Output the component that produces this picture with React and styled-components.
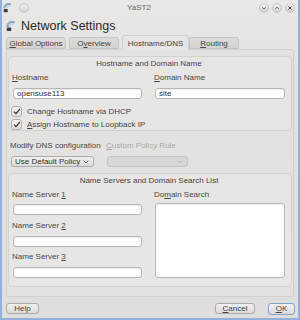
import styled, { createGlobalStyle } from "styled-components";

const GlobalStyle = createGlobalStyle`
  html, body { margin: 0; padding: 0; background: #f4f4f4; }
  body {
    font-family: "Liberation Sans", Arial, sans-serif;
    font-size: 8px;
    color: #444;
  }
  * { box-sizing: border-box; }
`;

const Window = styled.div`
  width: 300px;
  height: 320px;
  display: flex;
  flex-direction: column;
  background: linear-gradient(#e9e8e7 0, #e3e2e0 80px, #dfdedc 100%);
  border: 2px solid #8fb1da;
  border-top: none;
`;

const TitleBar = styled.div`
  height: 15px;
  display: flex;
  align-items: center;
  padding: 0 3px 0 1px;
  gap: 7px;
`;

const TitleText = styled.div`
  flex: 1;
  text-align: center;
  color: #666;
  font-size: 8px;
  padding-right: 10px;
`;

const WinButtons = styled.div`
  display: flex;
  gap: 3px;
`;

const Header = styled.div`
  height: 20px;
  display: flex;
  align-items: center;
  gap: 5px;
  padding-left: 4px;
  padding-top: 2px;
`;

const Heading = styled.div`
  font-size: 12.5px;
  color: #2a2a2a;
`;

const TabBar = styled.div`
  height: 14px;
  display: flex;
  align-items: flex-end;
  padding-left: 4px;
  position: relative;
  z-index: 1;
`;

const Tab = styled.div`
  width: ${(p) => p.$w}px;
  height: ${(p) => (p.$active ? 15 : 12)}px;
  margin-right: ${(p) => p.$mr || 0}px;
  margin-bottom: ${(p) => (p.$active ? -1 : 0)}px;
  display: flex;
  align-items: center;
  justify-content: center;
  border: 1px solid ${(p) => (p.$active ? "#d2d0ce" : "#c6c4c2")};
  border-bottom: ${(p) => (p.$active ? "none" : "1px solid #c6c4c2")};
  border-radius: 3px 3px 0 0;
  background: ${(p) =>
    p.$active ? "#e6e5e3" : "linear-gradient(#dedddb, #d4d3d1)"};
  color: #444;
`;

const Panel = styled.div`
  height: 248px;
  margin: 0 4px;
  border: 1px solid #d2d0ce;
  border-radius: 0 3px 3px 3px;
  background: #e3e2e0;
  padding: 6px 1px 0;
  display: flex;
  flex-direction: column;
`;

const Group = styled.div`
  height: ${(p) => p.$h}px;
  border: 1px solid #d4d2d0;
  border-radius: 4px;
  background: #e7e6e4;
  padding: 0 6px 0 4px;
`;

const GroupTitle = styled.div`
  height: 11px;
  line-height: 11px;
  margin-top: 1px;
  text-align: center;
  color: #444;
`;

const Columns = styled.div`
  display: grid;
  grid-template-columns: 129px 130px;
  column-gap: 13px;
`;

const Col = styled.div`
  display: flex;
  flex-direction: column;
`;

const Label = styled.div`
  height: 10px;
  line-height: 10px;
  margin-top: ${(p) => p.$mt || 0}px;
  margin-left: -1px;
  color: ${(p) => (p.$disabled ? "#aaa8a6" : "#484848")};
  white-space: nowrap;
`;

const Mn = styled.span`
  text-decoration: underline;
`;

const Input = styled.div`
  height: ${(p) => p.$h || 11}px;
  margin-top: ${(p) => p.$mt || 0}px;
  background: #fff;
  border: 1px solid #b9b7b5;
  border-radius: 3px;
  box-shadow: inset 0 1px 1px rgba(0, 0, 0, 0.08);
  padding: 0 3px;
  line-height: 9px;
  color: #333;
`;

const CheckRow = styled.div`
  height: 13px;
  margin-top: ${(p) => p.$mt || 0}px;
  margin-left: -2px;
  display: flex;
  align-items: center;
  gap: 5px;
  white-space: nowrap;
  color: #444;
`;

const CheckBox = styled.div`
  width: 11px;
  height: 11px;
  border: 1px solid #b0aeac;
  border-radius: 3px;
  background: linear-gradient(#f3f2f1, #e2e1df);
  display: flex;
  align-items: center;
  justify-content: center;
`;

const DnsRow = styled.div`
  margin-top: 10px;
  padding-left: 2px;
  height: 32px;
  display: grid;
  grid-template-columns: 96px 84px;
`;

const DnsCol = styled.div`
  display: flex;
  flex-direction: column;
  padding-left: 1px;
`;

const Combo = styled.div`
  width: ${(p) => p.$w}px;
  height: 11px;
  margin-top: 5px;
  border: 1px solid ${(p) => (p.$disabled ? "#c6c4c2" : "#adaba9")};
  border-radius: 3px;
  background: ${(p) =>
    p.$disabled ? "#d8d7d5" : "linear-gradient(#f1f0ef, #dddcda)"};
  display: flex;
  align-items: center;
  justify-content: space-between;
  padding: 0 4px 0 3px;
  color: #333;
  white-space: nowrap;
`;

const ButtonRow = styled.div`
  display: flex;
  align-items: center;
  padding: 5px 3px 0 4px;
  height: 18px;
`;

const Spacer = styled.div`
  flex: 1;
`;

const Button = styled.div`
  width: ${(p) => p.$w}px;
  height: ${(p) => (p.$focus ? 12 : 11)}px;
  margin-left: ${(p) => p.$ml || 0}px;
  border: 1px solid ${(p) => (p.$focus ? "#7fa4d2" : "#adaba9")};
  border-radius: 3px;
  background: linear-gradient(#f2f1f0, #dcdbd9);
  display: flex;
  align-items: center;
  justify-content: center;
  color: #444;
`;

const YastIcon = ({ size = 10 }) => (
  <svg width={size} height={size + 1} viewBox="0 0 10 11">
    <path d="M1.5 6 A4.5 4.5 0 0 1 8.5 1.8" fill="none" stroke="#8aa8c4" strokeWidth="2.2" />
    <path d="M3.5 6 A2.6 2.6 0 0 1 7.4 3.8" fill="none" stroke="#bcd0e2" strokeWidth="1.2" />
    <rect x="0.8" y="6.5" width="4.4" height="3.6" rx="0.5" fill="#3b3b3b" />
  </svg>
);

const RoundBtn = ({ glyph }) => (
  <svg width="10" height="10" viewBox="0 0 10 10">
    <defs>
      <linearGradient id="rb" x1="0" y1="0" x2="0" y2="1">
        <stop offset="0" stopColor="#f4f4f4" />
        <stop offset="1" stopColor="#cfcfcf" />
      </linearGradient>
    </defs>
    <circle cx="5" cy="5" r="4.4" fill="url(#rb)" stroke="#b9b9b9" strokeWidth="0.7" />
    {glyph === "down" && <path d="M3.3 4.3 L5 6 L6.7 4.3" fill="none" stroke="#555" strokeWidth="0.9" />}
    {glyph === "up" && <path d="M3.3 5.8 L5 4.1 L6.7 5.8" fill="none" stroke="#555" strokeWidth="0.9" />}
    {glyph === "x" && <path d="M3.5 3.5 L6.5 6.5 M6.5 3.5 L3.5 6.5" fill="none" stroke="#444" strokeWidth="1" />}
  </svg>
);

const Chevron = ({ color = "#555" }) => (
  <svg width="6" height="4" viewBox="0 0 6 4">
    <path d="M0.7 0.7 L3 3 L5.3 0.7" fill="none" stroke={color} strokeWidth="0.9" />
  </svg>
);

const Check = () => (
  <svg width="8" height="7" viewBox="0 0 8 7">
    <path d="M1 3.6 L3 5.6 L7 0.8" fill="none" stroke="#2a2a2a" strokeWidth="1.2" />
  </svg>
);

export default function App() {
  return (
    <>
      <GlobalStyle />
      <Window>
        <TitleBar>
          <YastIcon size={9} />
          <RoundBtn />
          <TitleText>YaST2</TitleText>
          <WinButtons>
            <RoundBtn glyph="down" />
            <RoundBtn glyph="up" />
            <RoundBtn glyph="x" />
          </WinButtons>
        </TitleBar>

        <Header>
          <YastIcon size={10} />
          <Heading>Network Settings</Heading>
        </Header>

        <TabBar>
          <Tab $w={60} $mr={3}>
            <span><Mn>G</Mn>lobal Options</span>
          </Tab>
          <Tab $w={50} $mr={3}>
            <span>O<Mn>v</Mn>erview</span>
          </Tab>
          <Tab $w={67} $active>
            <span>Hostname/DNS</span>
          </Tab>
          <Tab $w={50}>
            <span><Mn>R</Mn>outing</span>
          </Tab>
        </TabBar>

        <Panel>
          <Group $h={75}>
            <GroupTitle>Hostname and Domain Name</GroupTitle>
            <Columns>
              <Col>
                <Label $mt={4}><Mn>H</Mn>ostname</Label>
                <Input $mt={5}>opensuse113</Input>
              </Col>
              <Col>
                <Label $mt={4}><Mn>D</Mn>omain Name</Label>
                <Input $mt={5}>site</Input>
              </Col>
            </Columns>
            <CheckRow $mt={6}>
              <CheckBox><Check /></CheckBox>
              <span>Chan<Mn>g</Mn>e Hostname via DHCP</span>
            </CheckRow>
            <CheckRow>
              <CheckBox><Check /></CheckBox>
              <span><Mn>A</Mn>ssign Hostname to Loopback IP</span>
            </CheckRow>
          </Group>

          <DnsRow>
            <DnsCol>
              <Label>Modify DNS configuration</Label>
              <Combo $w={83}>
                <span>Use Default Policy</span>
                <Chevron />
              </Combo>
            </DnsCol>
            <DnsCol>
              <Label $disabled><Mn>C</Mn>ustom Policy Rule</Label>
              <Combo $w={81} $disabled>
                <span />
                <Chevron color="#b5b3b1" />
              </Combo>
            </DnsCol>
          </DnsRow>

          <Group $h={114}>
            <GroupTitle>Name Servers and Domain Search List</GroupTitle>
            <Columns>
              <Col>
                <Label $mt={4}>Name Server <Mn>1</Mn></Label>
                <Input $mt={4} />
                <Label $mt={6}>Name Server <Mn>2</Mn></Label>
                <Input $mt={5} />
                <Label $mt={5}>Name Server <Mn>3</Mn></Label>
                <Input $mt={5} />
              </Col>
              <Col>
                <Label $mt={4}>Do<Mn>m</Mn>ain Search</Label>
                <Input $mt={3} $h={75} />
              </Col>
            </Columns>
          </Group>
        </Panel>

        <ButtonRow>
          <Button $w={33}>Help</Button>
          <Spacer />
          <Button $w={40}><span><Mn>C</Mn>ancel</span></Button>
          <Button $w={27} $ml={13} $focus><span><Mn>O</Mn>K</span></Button>
        </ButtonRow>
      </Window>
    </>
  );
}
